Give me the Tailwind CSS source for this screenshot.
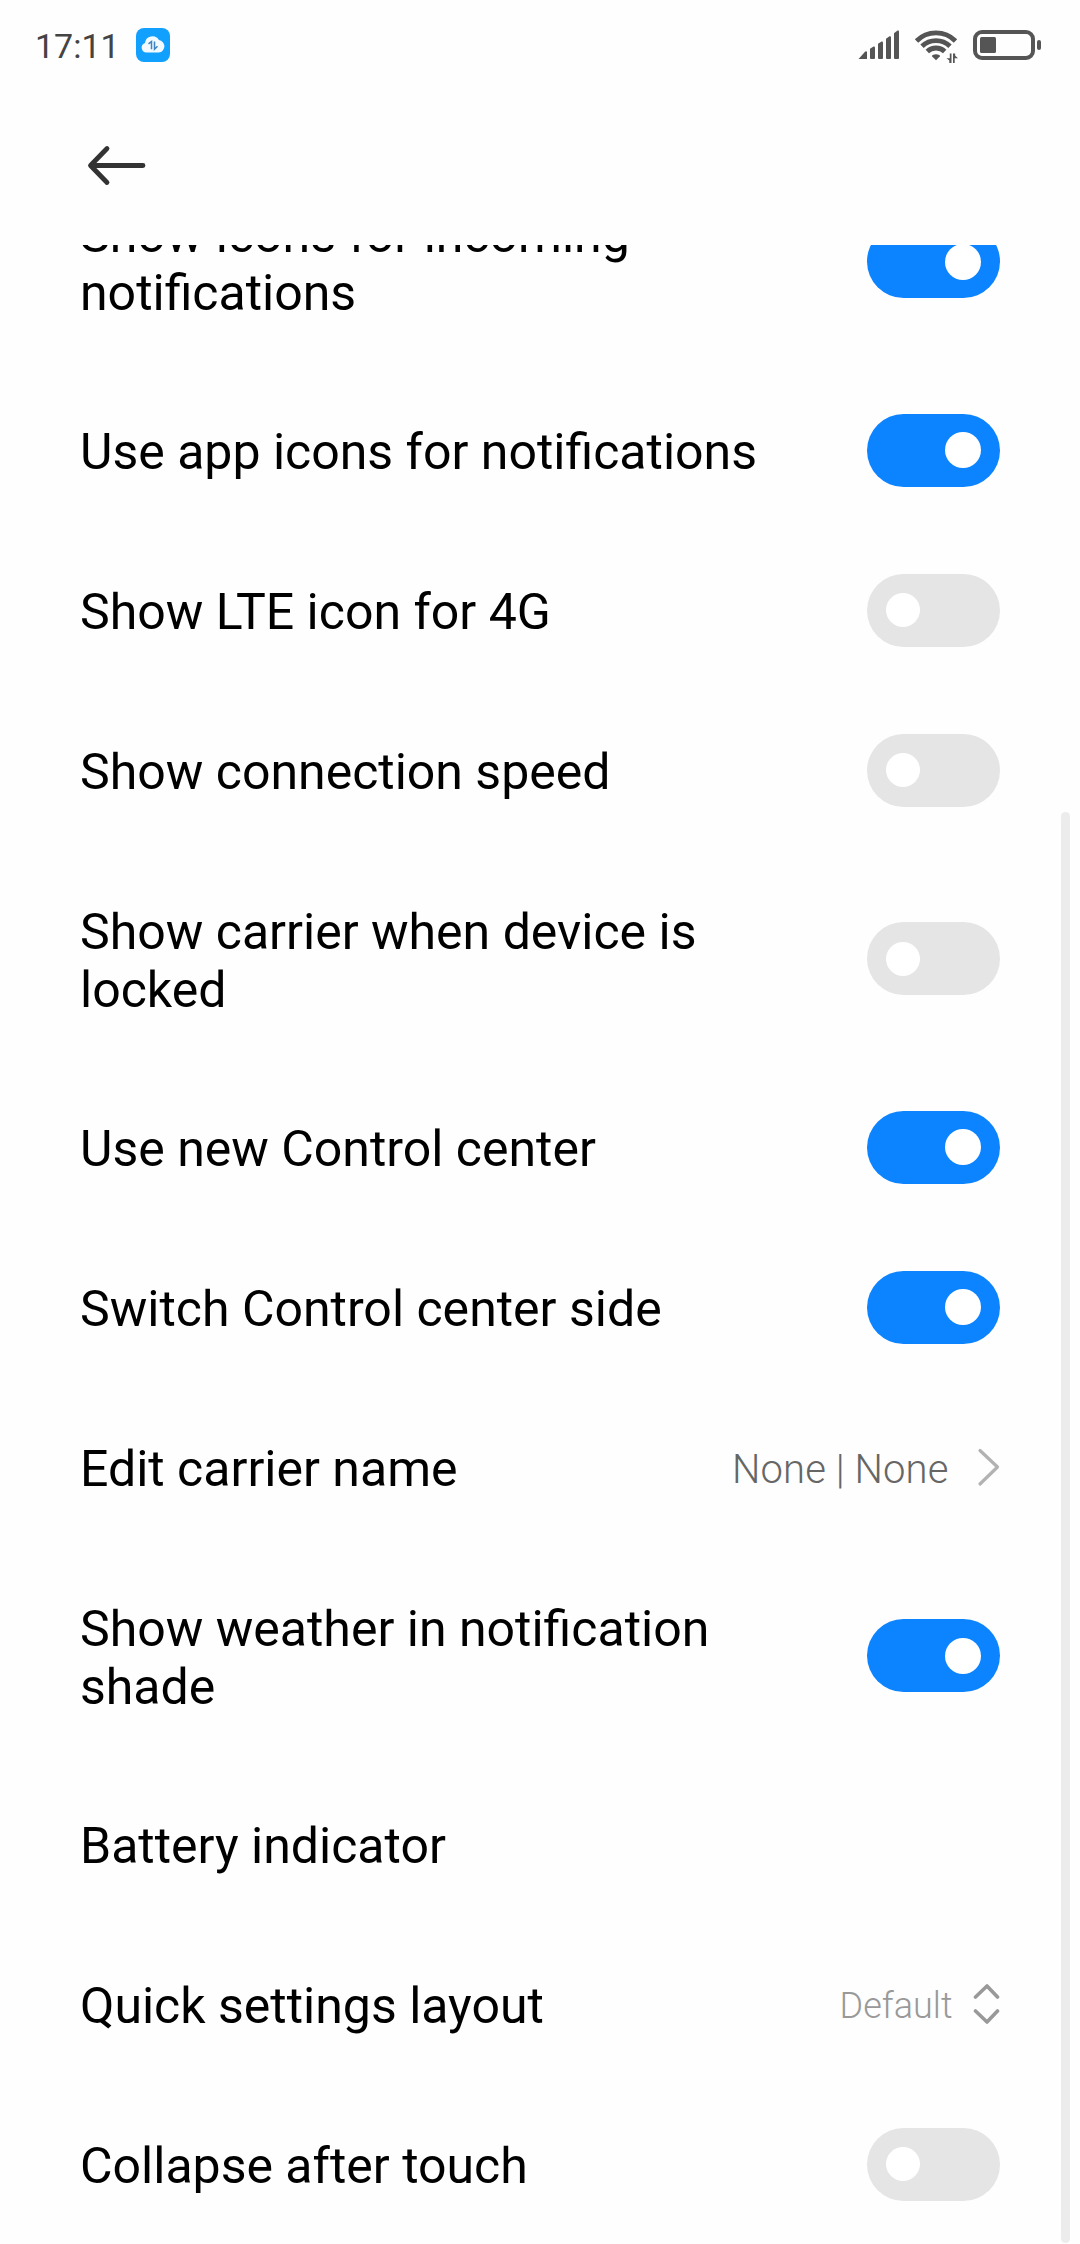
<!DOCTYPE html>
<html lang="en">
<head>
    <meta charset="UTF-8">
    <meta name="viewport" content="width=device-width, initial-scale=1.0">
    <title>Notifications & Control center</title>
    <script src="https://cdn.jsdelivr.net/npm/@tailwindcss/browser@4"></script>
</head>
<body class="bg-[#fefefe]">
    <div class="relative flex h-[2244px] w-[1080px] flex-col overflow-hidden bg-[#fefefe] font-['Roboto',sans-serif] text-black">
        <!-- Status bar -->
        <header class="flex h-[90px] shrink-0 items-center justify-between pl-[35px] pr-[38px]">
            <div class="flex items-center gap-[18px]">
                <span id="clock" class="w-[83px] whitespace-nowrap pt-[2px] text-[34px] leading-[40px] text-[#444]">17:11</span>
                <svg class="h-[34px] w-[34px]" viewBox="0 0 34 34">
                    <rect width="34" height="34" rx="8" fill="#12a0fe"/>
                    <path d="M11 24.6a5 5 0 0 1-2-9.700a7.500 7.500 0 0 1 13.900-2.800a6.300 6.300 0 0 1 0 12.500z" fill="#f2faff"/>
                    <path d="M12.500 15.800l3-2.300v7.700M18.500 13.500v7.700l3-3" fill="none" stroke="#3d84c4" stroke-width="1.500"/>
                </svg>
            </div>
            <svg class="h-[40px] w-[184px]" viewBox="0 0 184 40">
                <g fill="#555">
                    <path d="M1 33.500Q0 34 1 34h8v-7.300q-1-.7-2 0z"/>
                    <path d="M12 23.700l3.500-2.200q1.500-.3 1.500 1V33q0 1-1 1h-3q-1 0-1-1z"/>
                    <path d="M20 18.700l3.500-2.200q1.500-.3 1.500 1V33q0 1-1 1h-3q-1 0-1-1z"/>
                    <path d="M28 13.700l3.500-2.500q1.500-.3 1.500 1V33q0 1-1 1h-3q-1 0-1-1z"/>
                    <path d="M36 8.200l3.500-2.700q1.500-.5 1.500 1V33q0 1-1 1h-3q-1 0-1-1z"/>
                    <path d="M78 35.300l-3.800-3.800q-.6-1 .5-1.500q3.300-1.400 6.600 0q1.100.5.5 1.500z"/>
                    <path d="M91.800 28.500h1.700v9.500h-2.200v-2.500l-2.800-2.300h3.300zM95 28.500h2.200v2.300l2.800 2.500h-3.300v4.700h-1.700z"/>
                    <rect x="122" y="12" width="16" height="16" rx="1.500"/>
                    <rect x="179" y="15" width="4" height="10" rx="2"/>
                </g>
                <g fill="none" stroke="#555">
                    <path stroke-width="4.800" d="M58.500 16a27.500 27.500 0 0 1 39 0M64 21.300a20 20 0 0 1 28 0M69.300 26.500a12.500 12.500 0 0 1 17.400 0"/>
                    <rect stroke-width="4" x="117" y="7" width="58" height="26" rx="7"/>
                </g>
            </svg>
        </header>

        <!-- Back button -->
        <nav class="flex h-[155px] shrink-0 pl-[86px] pt-[54px]">
            <svg class="h-[42px] w-[62px]" viewBox="0 0 62 42" fill="none" stroke="#333" stroke-width="4.800" stroke-linecap="round" stroke-linejoin="round">
                <path d="M57 21.500H5M21 4.500L4.500 21.500L21 38.500"/>
            </svg>
        </nav>

        <!-- Settings list, scrolled -->
        <div class="flex-1 overflow-hidden">
            <main id="list" class="-mt-[92px] flex flex-col pl-20 pr-[80.5px] text-[50px] leading-[58px]"></main>
        </div>

        <!-- Scrollbar -->
        <div class="absolute left-[1061px] top-[812px] h-[1431px] w-[9px] rounded-full bg-[#ececec]"></div>
    </div>

    <script>
        const rows = [
            { title: 'Show icons for incoming<br>notifications', tall: true, on: true },
            { title: 'Use app icons for notifications', on: true },
            { title: 'Show LTE icon for 4G', on: false },
            { title: 'Show connection speed', on: false },
            { title: 'Show carrier when device is<br>locked', tall: true, on: false },
            { title: 'Use new Control center', on: true },
            { title: 'Switch Control center side', on: true },
            { title: 'Edit carrier name', value: 'None | None' },
            { title: 'Show weather in notification<br>shade', tall: true, on: true },
            { title: 'Battery indicator' },
            { title: 'Quick settings layout', select: 'Default' },
            { title: 'Collapse after touch', on: false }
        ];

        const toggleOn = `
            <div class="flex h-[73px] w-[133px] items-center justify-end rounded-full bg-[#0d84ff] pr-[18.5px]">
                <div class="h-9 w-9 rounded-full bg-white"></div>
            </div>`;
        const toggleOff = `
            <div class="flex h-[73px] w-[133px] items-center rounded-full bg-[#e5e5e5] pl-[19px]">
                <div class="h-[34px] w-[34px] rounded-full bg-white"></div>
            </div>`;

        function control(row) {
            if (row.value) {
                return `
                    <div class="flex items-center">
                        <span class="mr-[28px] mt-[5px] text-[40px] font-light leading-[46px] tracking-[0.1px] text-[#666]">${row.value}</span>
                        <svg class="h-[40px] w-[23px]" viewBox="0 0 23 40" fill="none" stroke="#b2b2b2" stroke-width="3.200" stroke-linecap="round" stroke-linejoin="round">
                            <path d="M3 3.500L20.500 20L3 37"/>
                        </svg>
                    </div>`;
            }
            if (row.select) {
                return `
                    <div class="flex items-center">
                        <span class="mr-5 mt-[3px] text-[36px] font-light leading-[42px] text-[#999]">${row.select}</span>
                        <svg class="h-[42px] w-[27px]" viewBox="0 0 27 42" fill="none" stroke="#999" stroke-width="3.600" stroke-linecap="round" stroke-linejoin="round">
                            <path d="M2.500 14L14 3L24.500 14M2.500 28L14 39L24.500 28"/>
                        </svg>
                    </div>`;
            }
            if (row.on === undefined) return '';
            return row.on ? toggleOn : toggleOff;
        }

        document.getElementById('list').innerHTML = rows.map(row => `
            <div class="${row.tall ? 'h-[217px]' : 'h-[160px]'} flex shrink-0 items-center justify-between">
                <span class="${row.tall ? 'pt-[5px]' : 'pt-[3px]'} whitespace-nowrap">${row.title}</span>
                ${control(row)}
            </div>
        `).join('');
    </script>
</body>
</html>
